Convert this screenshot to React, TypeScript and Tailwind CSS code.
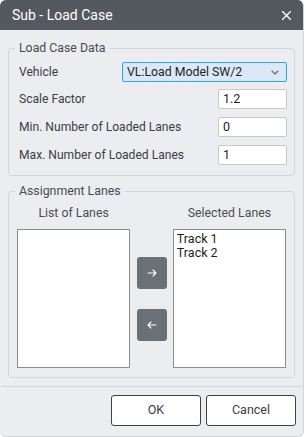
import React from "react";

const font = { fontFamily: "Roboto, 'Noto Sans', sans-serif" };

function Group({ title, children, className }: { title: string; children: React.ReactNode; className?: string }) {
  return (
    <div className={"relative border border-[#d3d5d9] rounded-[4px] " + (className ?? "")}>
      <span className="absolute -top-[9px] left-[6px] px-[4px] bg-[#ebedf0] text-[12.3px] leading-[16px] text-[#474a50]">
        {title}
      </span>
      {children}
    </div>
  );
}

function Row({ label, children }: { label: string; children: React.ReactNode }) {
  return (
    <div className="flex items-center justify-between h-[20px]">
      <span className="text-[12.1px] text-[#3b3e44]">{label}</span>
      {children}
    </div>
  );
}

function TextBox({ value }: { value: string }) {
  return (
    <div className="w-[69px] h-[20px] bg-white border border-[#c6c8cc] rounded-[2px] flex items-center px-[4px] text-[12.5px] text-[#1d1f22]">
      {value}
    </div>
  );
}

function ArrowBtn({ dir }: { dir: "right" | "left" }) {
  return (
    <div className="w-[30px] h-[32px] bg-[#6b7077] rounded-[3px] flex items-center justify-center">
      <svg width="10" height="8" viewBox="0 0 10 8" fill="none" stroke="white" strokeWidth="1.1" strokeLinecap="round" strokeLinejoin="round">
        {dir === "right" ? (
          <path d="M1 4h8M6 1l3 3-3 3" />
        ) : (
          <path d="M9 4H1M4 1L1 4l3 3" />
        )}
      </svg>
    </div>
  );
}

export default function App() {
  return (
    <div className="w-[306px] h-[437px] bg-white flex" style={font}>
      <div className="w-[304px] h-[437px] bg-[#ebedf0] rounded-[6px] overflow-hidden flex flex-col border-r border-b border-[#d2d4d8]">
        <div className="h-[30px] bg-[#545960] flex items-center justify-between pl-[12px] pr-[12px] shrink-0">
          <span className="text-white text-[14px]">Sub - Load Case</span>
          <svg width="9" height="9" viewBox="0 0 9 9" stroke="white" strokeWidth="1.3" strokeLinecap="square">
            <path d="M0.5 0.5l8 8M8.5 0.5l-8 8" />
          </svg>
        </div>

        <div className="px-[8px]">
          <Group title="Load Case Data" className="mt-[18px] pt-[13px] pb-[10px] pl-[10px] pr-[7px]">
            <Row label="Vehicle">
              <div className="w-[165px] h-[20px] bg-[#dce8f8] border border-[#21aaf0] rounded-[2px] flex items-center justify-between pl-[4px] pr-[7px] text-[12.3px] text-[#1d1f22]">
                <span>VL:Load Model SW/2</span>
                <svg width="8" height="5" viewBox="0 0 8 5" fill="none" stroke="#74777c" strokeWidth="1.4">
                  <path d="M0.7 0.7L4 4l3.3-3.3" />
                </svg>
              </div>
            </Row>
            <div className="mt-[7px]">
              <Row label="Scale Factor">
                <TextBox value="1.2" />
              </Row>
            </div>
            <div className="mt-[8px]">
              <Row label="Min. Number of Loaded Lanes">
                <TextBox value="0" />
              </Row>
            </div>
            <div className="mt-[8px]">
              <Row label="Max. Number of Loaded Lanes">
                <TextBox value="1" />
              </Row>
            </div>
          </Group>

          <Group title="Assignment Lanes" className="mt-[15px] pt-[13px] pb-[9px] px-[8px]">
            <div className="flex">
              <div className="w-[114px] flex flex-col">
                <div className="h-[16px] leading-[16px] text-center text-[12.3px] text-[#4a4d53]">List of Lanes</div>
                <div className="mt-[8px] h-[139px] bg-white border border-[#8b8e93]" />
              </div>
              <div className="w-[43px] flex flex-col">
                <div className="h-[24px]" />
                <div className="h-[139px] flex flex-col items-center justify-center gap-[20px] pl-[1px]">
                  <ArrowBtn dir="right" />
                  <ArrowBtn dir="left" />
                </div>
              </div>
              <div className="w-[114px] flex flex-col">
                <div className="h-[16px] leading-[16px] text-center text-[12.3px] text-[#4a4d53]">Selected Lanes</div>
                <div className="mt-[8px] h-[139px] bg-white border border-[#8b8e93] pl-[3px] pt-[2px] text-[12.5px] leading-[13.5px] text-[#1d1f22]">
                  <div>Track 1</div>
                  <div>Track 2</div>
                </div>
              </div>
            </div>
          </Group>
        </div>

        <div className="mt-[8px] border-t border-[#d3d5d9] mx-[1px]" />

        <div className="flex justify-end gap-[5px] pr-[7px] pt-[8px]">
          <div className="w-[90px] h-[31px] bg-white border border-[#3e4248] rounded-[3px] flex items-center justify-center text-[12.5px] text-[#3b3e44]">
            OK
          </div>
          <div className="w-[90px] h-[31px] bg-white border border-[#3e4248] rounded-[3px] flex items-center justify-center text-[12.5px] text-[#3b3e44]">
            Cancel
          </div>
        </div>
      </div>
    </div>
  );
}
